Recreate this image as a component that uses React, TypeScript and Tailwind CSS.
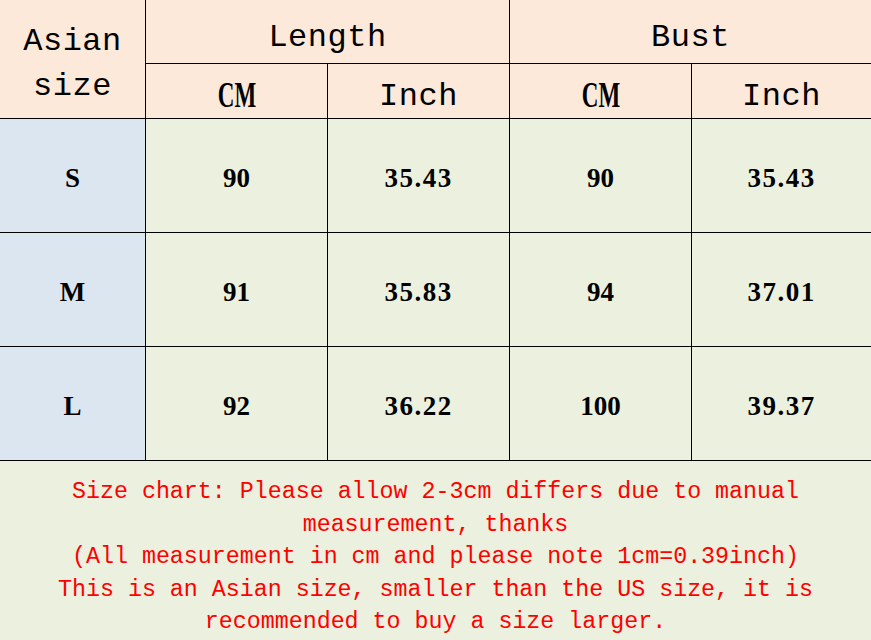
const rows = [
  { size: "S", lenCm: "90", lenIn: "35.43", bustCm: "90", bustIn: "35.43" },
  { size: "M", lenCm: "91", lenIn: "35.83", bustCm: "94", bustIn: "37.01" },
  { size: "L", lenCm: "92", lenIn: "36.22", bustCm: "100", bustIn: "39.37" },
];

const mono = "font-['Liberation_Mono','DejaVu_Sans_Mono',monospace]";
const serif = "font-['Liberation_Serif','DejaVu_Serif',serif]";

function CmLabel() {
  return (
    <span className={`${serif} inline-block scale-x-[0.64] text-[36px] font-bold leading-none`}>CM</span>
  );
}

export default function App() {
  const head = "flex items-center justify-center border-black bg-[#fde9d9] text-black";
  const cell = `flex items-center justify-center border-black pt-[6px] ${serif} text-[27px] font-bold text-black`;

  return (
    <div className="h-[640px] w-[871px] overflow-hidden bg-[#ebf1de]">
      <div className="grid grid-cols-[146px_182px_182px_182px_1fr] grid-rows-[64px_55px_114px_114px_114px]">
        <div className={`${head} ${mono} row-span-2 flex-col border-r border-b pt-[10px] text-[32px] leading-[45px] tracking-[0.5px]`}>
          <span>Asian</span>
          <span>size</span>
        </div>
        <div className={`${head} ${mono} col-span-2 border-r border-b pt-[12px] text-[32px] tracking-[0.5px]`}>Length</div>
        <div className={`${head} ${mono} col-span-2 border-b pt-[12px] text-[32px] tracking-[0.5px]`}>Bust</div>

        <div className={`${head} border-r border-b pt-[8px]`}>
          <CmLabel />
        </div>
        <div className={`${head} ${mono} border-r border-b pt-[12px] text-[32px] tracking-[0.5px]`}>Inch</div>
        <div className={`${head} border-r border-b pt-[8px]`}>
          <CmLabel />
        </div>
        <div className={`${head} ${mono} border-b pt-[12px] text-[32px] tracking-[0.5px]`}>Inch</div>

        {rows.map((r) => (
          <>
            <div key={`${r.size}-s`} className={`${cell} border-r border-b bg-[#dce6f1]`}>{r.size}</div>
            <div key={`${r.size}-a`} className={`${cell} border-r border-b bg-[#ebf1de]`}>{r.lenCm}</div>
            <div key={`${r.size}-b`} className={`${cell} border-r border-b bg-[#ebf1de] tracking-[1.5px]`}>{r.lenIn}</div>
            <div key={`${r.size}-c`} className={`${cell} border-r border-b bg-[#ebf1de]`}>{r.bustCm}</div>
            <div key={`${r.size}-d`} className={`${cell} border-b bg-[#ebf1de] tracking-[1.5px]`}>{r.bustIn}</div>
          </>
        ))}
      </div>

      <div className={`${mono} flex flex-col items-center pt-[15px] text-[23.3px] leading-[32.5px] text-[#ff0000]`}>
        <span>Size chart: Please allow 2-3cm differs due to manual</span>
        <span>measurement, thanks</span>
        <span>(All measurement in cm and please note 1cm=0.39inch)</span>
        <span>This is an Asian size, smaller than the US size, it is</span>
        <span>recommended to buy a size larger.</span>
      </div>
    </div>
  );
}
